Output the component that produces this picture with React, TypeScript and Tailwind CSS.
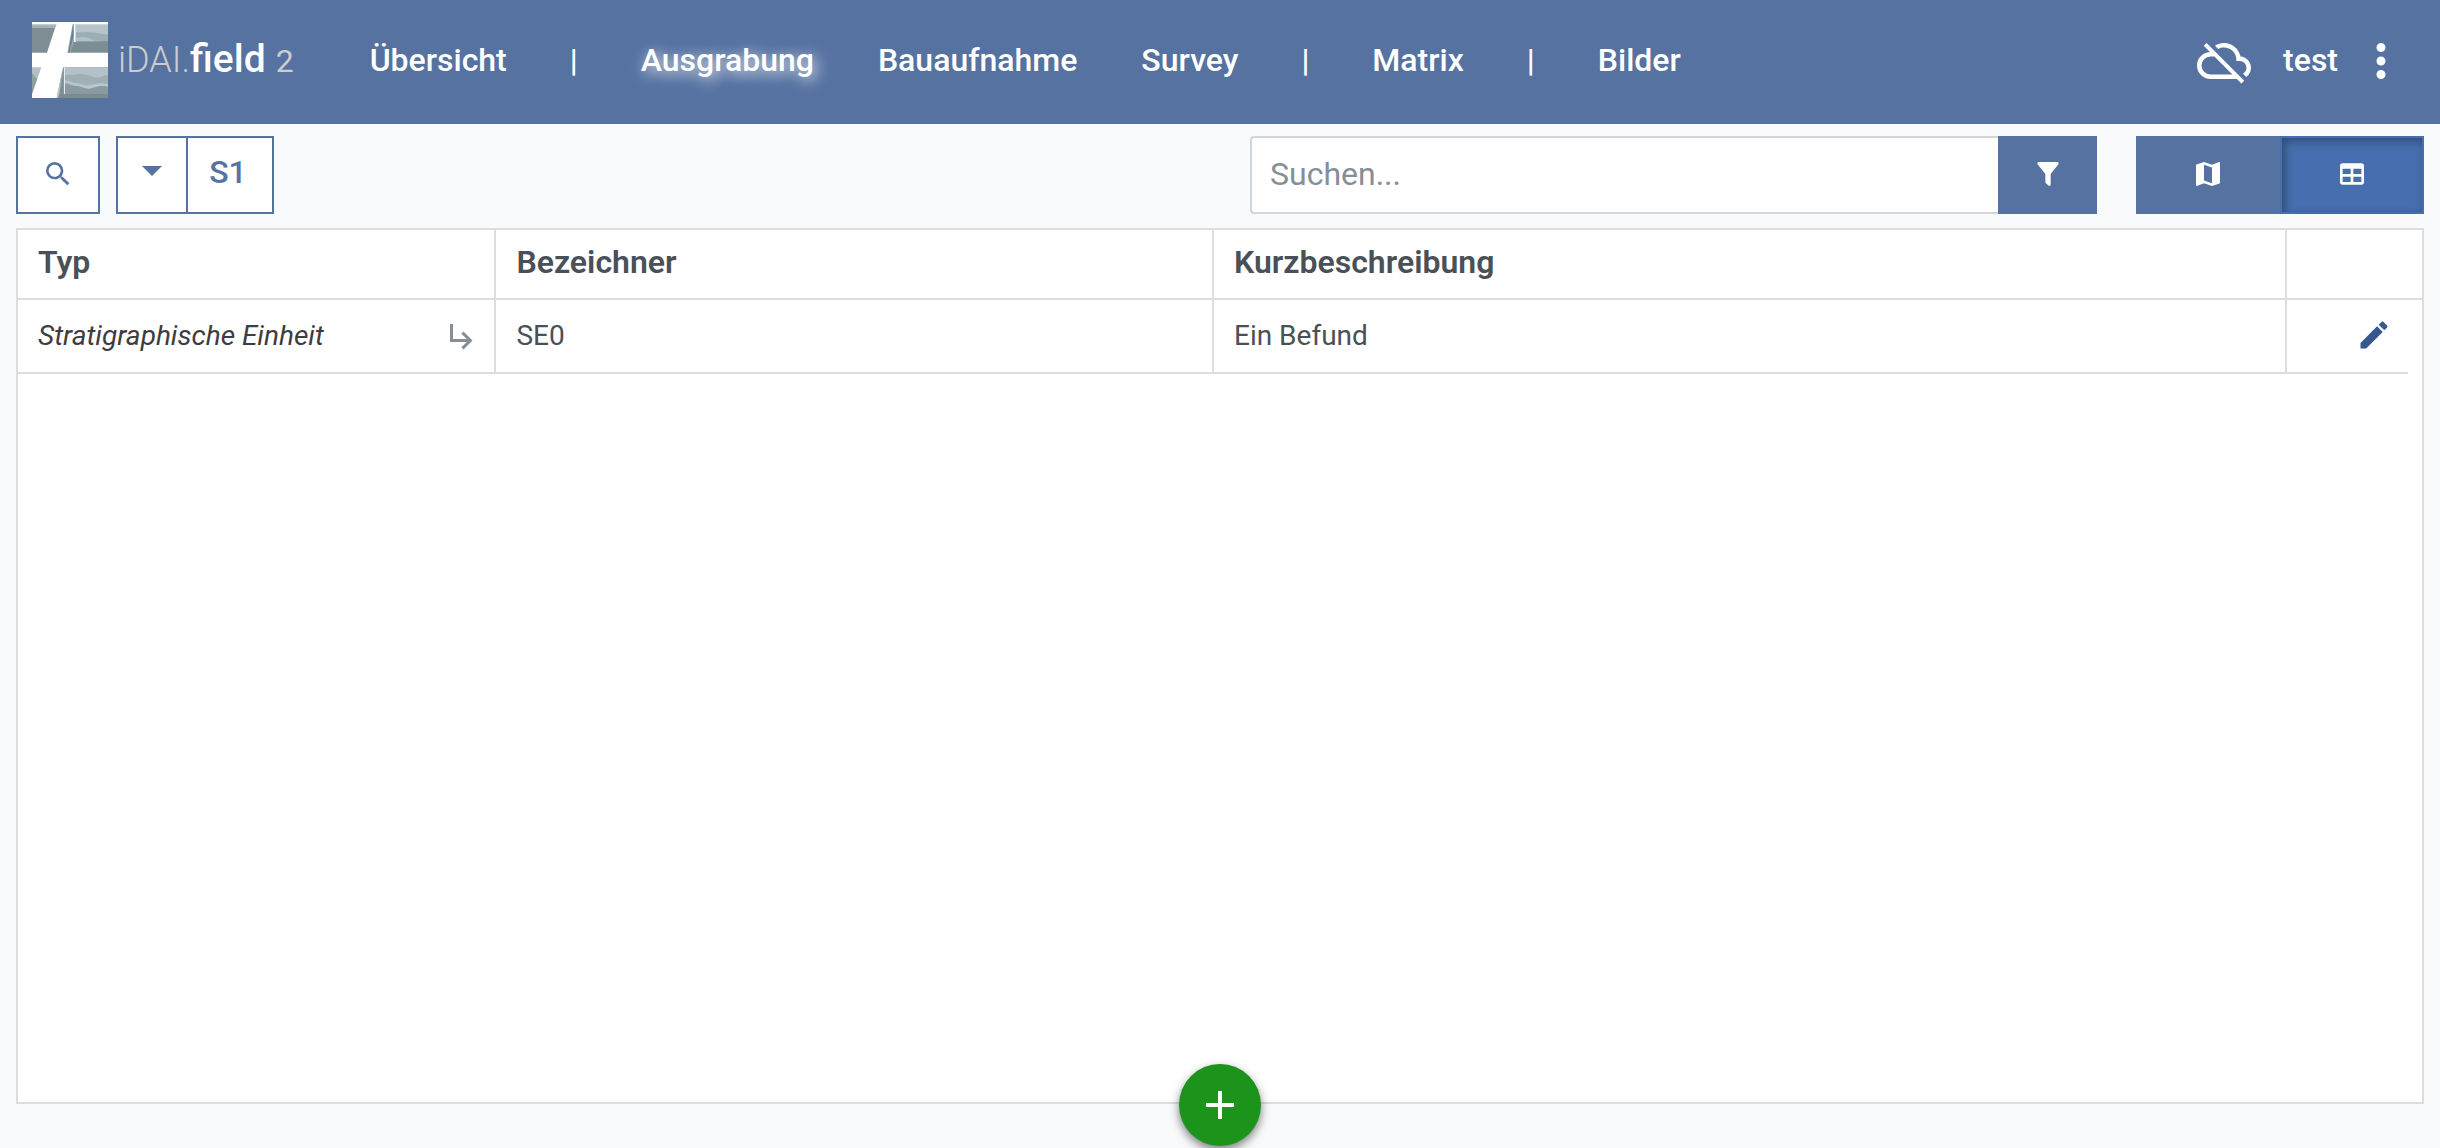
import React from "react";

const icons = {
  cloudOff:
    "M7.73,10L15.73,18H6A4,4 0 0,1 2,14A4,4 0 0,1 6,10M3,5.27L5.75,8C2.56,8.15 0,10.77 0,14A6,6 0 0,0 6,20H17.73L19.73,22L21,20.73L4.27,4M19.35,10.03C18.67,6.59 15.64,4 12,4C10.5,4 9.15,4.43 8,5.17L9.45,6.63C10.21,6.23 11.08,6 12,6A5.5,5.5 0 0,1 17.5,11.5V12H19A3,3 0 0,1 22,15C22,16.13 21.36,17.11 20.44,17.62L21.89,19.07C23.16,18.16 24,16.68 24,15C24,12.36 21.95,10.22 19.35,10.03Z",
  dots:
    "M12,16A2,2 0 0,1 14,18A2,2 0 0,1 12,20A2,2 0 0,1 10,18A2,2 0 0,1 12,16M12,10A2,2 0 0,1 14,12A2,2 0 0,1 12,14A2,2 0 0,1 10,12A2,2 0 0,1 12,10M12,4A2,2 0 0,1 14,6A2,2 0 0,1 12,8A2,2 0 0,1 10,6A2,2 0 0,1 12,4Z",
  magnify:
    "M9.5,3A6.5,6.5 0 0,1 16,9.5C16,11.11 15.41,12.59 14.44,13.73L14.71,14H15.5L20.5,19L19,20.5L14,15.5V14.71L13.73,14.44C12.59,15.41 11.11,16 9.5,16A6.5,6.5 0 0,1 3,9.5A6.5,6.5 0 0,1 9.5,3M9.5,5C7,5 5,7 5,9.5C5,12 7,14 9.5,14C12,14 14,12 14,9.5C14,7 12,5 9.5,5Z",
  caret: "M7,10L12,15L17,10H7Z",
  filter:
    "M14,12V19.88C14.04,20.18 13.94,20.5 13.71,20.71C13.32,21.1 12.69,21.1 12.3,20.71L10.29,18.7C10.06,18.47 9.96,18.16 10,17.87V12H9.97L4.21,4.62C3.87,4.19 3.95,3.56 4.38,3.22C4.57,3.08 4.78,3 5,3V3H19V3C19.22,3 19.43,3.08 19.62,3.22C20.05,3.56 20.13,4.19 19.79,4.62L14.03,12H14Z",
  map:
    "M15,19L9,16.89V5L15,7.11M20.5,3C20.44,3 20.39,3 20.34,3L15,5.1L9,3L3.36,4.9C3.15,4.97 3,5.15 3,5.38V20.5A0.5,0.5 0 0,0 3.5,21C3.55,21 3.61,21 3.66,20.97L9,18.9L15,21L20.64,19.1C20.85,19 21,18.85 21,18.62V3.5A0.5,0.5 0 0,0 20.5,3Z",
  table:
    "M5,4H19A2,2 0 0,1 21,6V18A2,2 0 0,1 19,20H5A2,2 0 0,1 3,18V6A2,2 0 0,1 5,4M5,8V12H11V8H5M13,8V12H19V8H13M5,14V18H11V14H5M13,14V18H19V14H13Z",
  subdirectory:
    "M19,15L13,21L11.58,19.58L15.17,16H4V4H6V14H15.17L11.58,10.42L13,9L19,15Z",
  pencil:
    "M20.71,7.04C21.1,6.65 21.1,6 20.71,5.63L18.37,3.29C18,2.9 17.35,2.9 16.96,3.29L15.12,5.12L18.87,8.87M3,17.25V21H6.75L17.81,9.93L14.06,6.18L3,17.25Z",
  plus: "M19,13H13V19H11V13H5V11H11V5H13V11H19V13Z",
};

function Icon({ name, className }: { name: keyof typeof icons; className: string }) {
  return (
    <svg viewBox="0 0 24 24" fill="currentColor" fillRule="evenodd" aria-hidden="true" className={className}>
      <path d={icons[name]} />
    </svg>
  );
}

function Logo() {
  return (
    <svg viewBox="0 0 228 228" className="size-19 shrink-0" aria-hidden="true">
      <rect width="228" height="228" fill="#fff" />
      {/* upper left trench */}
      <path d="M0 6H73L45 92H0Z" fill="#7f8e95" />
      <path d="M0 6H73L69 18H0Z" fill="#a3b0b7" />
      <path d="M0 6H73L72 10H0Z" fill="#c3cdd2" />
      {/* upper right trench */}
      <path d="M122 6H127V58L116 92H106Z" fill="#9aa9b2" />
      <path d="M123 10L125 40L113 92H109Z" fill="#71838e" />
      <path d="M131 6H228V92H115L125 60H131Z" fill="#7c8d94" />
      <path d="M131 6H228V58H131Z" fill="#9badb5" />
      <path d="M131 6H228V37C214 38 205 33 190 32C170 31 155 30 131 31Z" fill="#b7c3ca" />
      <path d="M131 48C150 44 165 45 177 51C188 57 200 57 212 58H131Z" fill="#b3c0c7" />
      <path d="M131 6H228V10H131Z" fill="#cdd5d9" />
      <path d="M126 6H130V59H126Z" fill="#fff" />
      {/* lower left trench */}
      <path d="M0 136H28L0 216Z" fill="#b3bfc6" />
      <path d="M0 154C6 160 10 168 16 170L0 216Z" fill="#8e9ea5" />
      {/* lower right trench */}
      <path d="M93 136H228V228H74Z" fill="#8b9ba2" />
      <path d="M92 138L80 228H74Z" fill="#b9c4ca" />
      <path d="M94 150V218L82 228Z" fill="#7d8f97" />
      <path d="M99 136H228V190H99Z" fill="#9eafb6" />
      <path d="M99 136H228V160C215 158 212 165 199 166C180 168 172 156 150 156C130 155 118 162 99 158Z" fill="#b5c1c8" />
      <path d="M99 176C112 174 118 183 133 184C148 184 155 192 170 190C190 186 205 180 228 187V194C205 188 190 196 172 200C155 201 150 193 135 192C118 191 110 183 99 184Z" fill="#b9c5cb" />
      <path d="M99 185C110 184 118 192 135 193C150 194 155 202 172 201C190 197 205 189 228 195V228H99Z" fill="#8a9aa1" />
      <path d="M84 216H228V228H78Z" fill="#7b8b90" />
      <path d="M96 136H99V216H96Z" fill="#e6eaec" />
    </svg>
  );
}

const navLink = "px-8 text-[32px] leading-12";

function Separator() {
  return <span className="px-[31px] text-[32px] leading-12">|</span>;
}

const iconButton = "flex items-center justify-center cursor-pointer pb-0.5";

export default function App() {
  return (
    <div className="flex min-h-screen flex-col bg-[#f8fafc] font-['Roboto',sans-serif] text-[#495057]">
      <header className="flex h-31 items-center justify-between bg-[#5572a1] px-8 text-white">
        <div className="flex items-center">
          <a href="#" className="flex items-center gap-2.5 pb-1">
            <Logo />
            <span className="flex items-baseline leading-12 whitespace-pre text-[#ccc]">
              <span className="text-[36px] font-light">iDAI.</span>
              <span className="text-[39px] font-medium text-white">field</span>
              <span className="pl-2.5 text-[32px]">2</span>
            </span>
          </a>
          <nav aria-label="Hauptnavigation" className="flex items-center pb-1 pl-11 font-medium">
            <a href="#uebersicht" className={navLink}>Übersicht</a>
            <Separator />
            <a href="#ausgrabung" aria-current="page" className="px-8 text-[32px] leading-12 [text-shadow:3px_3px_15px_#fff]">
              Ausgrabung
            </a>
            <a href="#bauaufnahme" className={navLink}>Bauaufnahme</a>
            <a href="#survey" className={navLink}>Survey</a>
            <Separator />
            <a href="#matrix" className={navLink}>Matrix</a>
            <Separator />
            <a href="#bilder" className={navLink}>Bilder</a>
          </nav>
        </div>
        <div className="flex items-center pb-0.5">
          <Icon name="cloudOff" className="size-[54px]" />
          <span className="pb-0.5 pl-8 text-[32px] leading-12 font-medium">test</span>
          <button type="button" aria-label="Menü" className="cursor-pointer pl-4">
            <Icon name="dots" className="size-[54px]" />
          </button>
        </div>
      </header>

      <div className="flex items-stretch justify-between px-4 pt-3">
        <div className="flex h-[78px] gap-4 text-[#5572a1]">
          <button type="button" aria-label="Suche" className={`${iconButton} w-21 border-2 border-[#5572a1] bg-white`}>
            <Icon name="magnify" className="size-8" />
          </button>
          <div className="flex border-2 border-[#5572a1] bg-white">
            <button type="button" aria-label="Maßnahme auswählen" className="flex w-17 cursor-pointer items-center justify-center pb-2.5">
              <Icon name="caret" className="size-12" />
            </button>
            <button type="button" className="w-21.5 cursor-pointer border-l-2 border-[#5572a1] pr-1 pb-1.5 text-[32px] leading-12 font-medium">
              S1
            </button>
          </div>
        </div>
        <div className="flex w-1/2 gap-[39px] pl-7.5">
          <form role="search" className="flex grow">
            <input
              type="text"
              aria-label="Suchen"
              placeholder="Suchen..."
              className="min-w-0 grow rounded-l-sm border-2 border-r-0 border-[#d3d5d8] bg-white px-4.5 pb-0.5 text-[32px] leading-12 outline-none placeholder:text-[#868e96]"
            />
            <button type="button" aria-label="Filter" className={`${iconButton} w-[99px] bg-[#5572a1] text-white`}>
              <Icon name="filter" className="size-8" />
            </button>
          </form>
          <div className="flex text-white">
            <button type="button" aria-label="Kartenansicht" className={`${iconButton} w-36 bg-[#5572a1]`}>
              <Icon name="map" className="size-8" />
            </button>
            <button
              type="button"
              aria-label="Listenansicht"
              aria-pressed="true"
              className={`${iconButton} w-36 border-2 border-[#476eae] bg-[#476eae] shadow-[inset_3px_3px_8px_#314b73]`}
            >
              <Icon name="table" className="size-8" />
            </button>
          </div>
        </div>
      </div>

      <main className="relative mx-4 mt-3.5 mb-11 grow border-2 border-[#ddd] bg-white">
        <table className="w-full table-fixed border-separate border-spacing-0 text-left">
          <colgroup>
            <col className="w-[19.9%]" />
            <col className="w-[29.85%]" />
            <col className="w-[44.65%]" />
            <col />
            <col className="w-3.5" />
          </colgroup>
          <thead>
            <tr className="h-[70px] text-[32px] leading-12">
              <th scope="col" className="border-r-2 border-b-2 border-[#ddd] px-5 pb-1 font-semibold">Typ</th>
              <th scope="col" className="border-r-2 border-b-2 border-[#ddd] px-5 pb-1 font-semibold">Bezeichner</th>
              <th scope="col" className="border-r-2 border-b-2 border-[#ddd] px-5 pb-1 font-semibold">Kurzbeschreibung</th>
              <td colSpan={2} className="border-b-2 border-[#ddd]" />
            </tr>
          </thead>
          <tbody>
            <tr className="h-[74px] text-[28px] leading-10">
              <td className="border-r-2 border-b-2 border-[#ddd] px-5">
                <div className="flex items-center justify-between">
                  <span className="text-[#3d3d3d] italic">Stratigraphische Einheit</span>
                  <button type="button" aria-label="Untergeordnete Ressourcen" className="-mr-1.5 cursor-pointer text-[#868e96]">
                    <Icon name="subdirectory" className="size-9" />
                  </button>
                </div>
              </td>
              <td className="border-r-2 border-b-2 border-[#ddd] px-5">SE0</td>
              <td className="border-r-2 border-b-2 border-[#ddd] px-5">Ein Befund</td>
              <td className="border-b-2 border-[#ddd] pr-4 pb-0.5">
                <button type="button" aria-label="Bearbeiten" className="ml-auto block cursor-pointer text-[#36588f]">
                  <Icon name="pencil" className="size-9" />
                </button>
              </td>
              <td />
            </tr>
          </tbody>
        </table>
        <button
          type="button"
          aria-label="Ressource hinzufügen"
          className="absolute -bottom-11 left-1/2 flex size-[82px] -translate-x-1/2 cursor-pointer items-center justify-center rounded-full bg-[#1c941c] text-white shadow-[0_4px_10px_rgba(0,0,0,0.5)]"
        >
          <Icon name="plus" className="size-12" />
        </button>
      </main>
    </div>
  );
}
